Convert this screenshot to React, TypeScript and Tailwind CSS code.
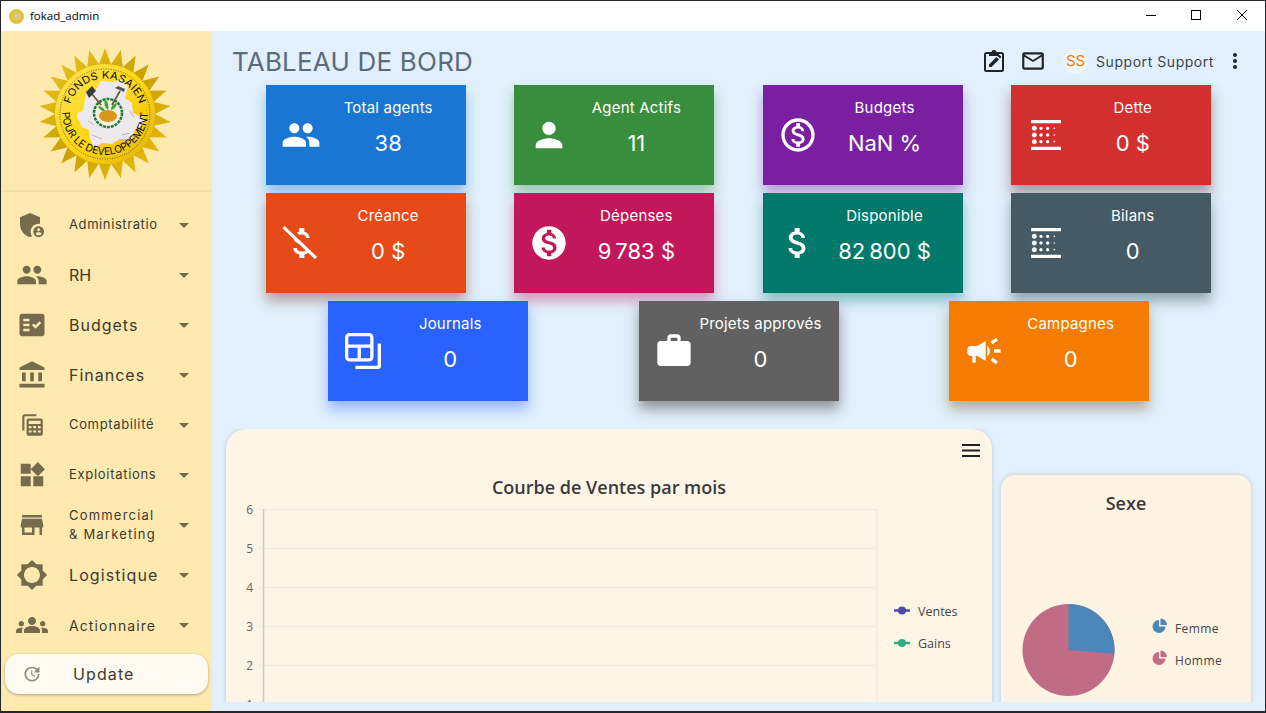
import React from "react";
import {
  MdAdminPanelSettings,
  MdPeople,
  MdPerson,
  MdFactCheck,
  MdAccountBalance,
  MdWidgets,
  MdStore,
  MdBrightness5,
  MdGroups,
  MdUpdate,
  MdArrowDropDown,
  MdOutlineMonetizationOn,
  MdMonetizationOn,
  MdBlurLinear,
  MdAttachMoney,
  MdWork,
  MdCampaign,
  MdMoreVert,
  MdMailOutline,
} from "react-icons/md";

function CalcStack({ className }: { className?: string }) {
  return (
    <svg viewBox="0 0 24 24" className={className} fill="currentColor">
      <path d="M3 4.500A2.500 2.500 0 0 1 5.500 2H16v2H5.500a.5.5 0 0 0-.5.5V17H3z" />
      <path d="M9 6h11a2 2 0 0 1 2 2v12a2 2 0 0 1-2 2H9a2 2 0 0 1-2-2V8a2 2 0 0 1 2-2zm0 2v3h11V8zm0 5v2h2.500v-2zm4.200 0v2h2.600v-2zm4.300 0v2H20v-2zM9 17v2h2.500v-2zm4.200 0v2h2.600v-2zm4.300 0v2H20v-2z" fillRule="evenodd" />
    </svg>
  );
}

function JournalIcon({ className }: { className?: string }) {
  return (
    <svg viewBox="0 0 24 24" className={className} fill="currentColor">
      <path
        fillRule="evenodd"
        d="M3 0h13a3 3 0 0 1 3 3v13a3 3 0 0 1-3 3H3a3 3 0 0 1-3-3V3a3 3 0 0 1 3-3zM3 2.200a.8.8 0 0 0-.8.8V7.600h14.600V3a.8.8 0 0 0-.8-.8zM2.200 9.800V16a.8.8 0 0 0 .8.8h5.400V9.800zM10.600 9.800v7H16a.8.8 0 0 0 .8-.8V9.800z"
      />
      <path d="M21.800 7H24v15a2 2 0 0 1-2 2H7v-2.200h14.800z" />
    </svg>
  );
}

function ClipboardEdit({ className }: { className?: string }) {
  return (
    <svg viewBox="0 0 24 24" className={className} fill="currentColor">
      <path
        fillRule="evenodd"
        d="M4.500 3H9.500a2.500 2 0 0 1 5 0h5A2.500 2.500 0 0 1 22 5.500v15a2.500 2.500 0 0 1-2.500 2.500h-15A2.500 2.500 0 0 1 2 20.500v-15A2.500 2.500 0 0 1 4.500 3zm0 2a.5.5 0 0 0-.5.5v15a.5.5 0 0 0 .5.5h15a.5.5 0 0 0 .5-.5v-15a.5.5 0 0 0-.5-.5H17v2H7V5z"
      />
      <path d="M7 15.500 14.500 8l2.500 2.500L9.500 18H7zM15.500 7l1-1a.7.7 0 0 1 1 0l1.500 1.500a.7.7 0 0 1 0 1l-1 1z" />
    </svg>
  );
}

function MoneyOffLong({ className }: { className?: string }) {
  return (
    <svg viewBox="0 0 24 24" className={className} fill="currentColor">
      <path d="M12.500 6.900c1.780 0 2.440.85 2.500 2.100h2.210c-.07-1.720-1.120-3.300-3.210-3.810V3h-3v2.160c-.53.12-1.030.3-1.480.54l1.470 1.470c.41-.17.91-.27 1.510-.27zM7.500 8.770c0 2.080 1.560 3.220 3.910 3.920l3.510 3.510c-.34.48-1.050.91-2.420.91-2.060 0-2.870-.92-2.980-2.100h-2.200c.12 2.190 1.760 3.420 3.680 3.830V21h3v-2.150c.96-.18 1.820-.55 2.450-1.120z" />
      <path d="M1.500 2.500 21 21" stroke="currentColor" strokeWidth="1.900" fill="none" />
    </svg>
  );
}

// sceau du fonds, dessiné à la main
function Logo() {
  const points: string[] = [];
  const n = 26;
  for (let i = 0; i < n * 2; i++) {
    const r = i % 2 === 0 ? 66 : 50;
    const a = (i * Math.PI) / n - Math.PI / 2;
    points.push(`${75 + r * Math.cos(a)},${75 + r * Math.sin(a)}`);
  }
  return (
    <svg width="150" height="150" viewBox="0 0 150 150">
      <defs>
        <linearGradient id="gold" x1="0" y1="0" x2="1" y2="1">
          <stop offset="0" stopColor="#f2cf20" />
          <stop offset="0.5" stopColor="#c9a000" />
          <stop offset="1" stopColor="#efc414" />
        </linearGradient>
        <linearGradient id="disc" x1="0" y1="0" x2="1" y2="1">
          <stop offset="0" stopColor="#fde35a" />
          <stop offset="0.55" stopColor="#ffd60f" />
          <stop offset="1" stopColor="#dfb00d" />
        </linearGradient>
        <path id="arcTop" d="M 43 92 A 36 36 0 1 1 107 92" />
        <path id="arcBottom" d="M 32 73 A 43 43 0 0 0 118 73" />
      </defs>
      <polygon points={points.join(" ")} fill="url(#gold)" />
      <circle cx="75" cy="75" r="50" fill="url(#disc)" />
      <circle cx="75" cy="75" r="45" fill="none" stroke="#222" strokeWidth="0.7" strokeDasharray="1 1.500" />
      <path
        d="M47 74l6-2 3-17 9-3 6-10 13 1 7-3 7 8-3 11 7 5 1 10 13 6-6 8-5 2-3 10-12 0-8 5-10-1-8 4-4-8-1-9-7-3-5-10z"
        fill="#eceaee"
      />
      <path d="M58 82l6 4M62 96l10 4M92 96l8-2M100 72l4 6" stroke="#b8b6ba" strokeWidth="1" />
      <text fontSize="10.500" fill="#111" fontFamily="Inter, sans-serif">
        <textPath href="#arcTop" startOffset="50%" textAnchor="middle" textLength="92" lengthAdjust="spacingAndGlyphs">
          FONDS KASAIEN
        </textPath>
      </text>
      <text fontSize="10.500" fill="#111" fontFamily="Inter, sans-serif">
        <textPath href="#arcBottom" startOffset="50%" textAnchor="middle" textLength="134" lengthAdjust="spacingAndGlyphs">
          POUR LE DEVELOPPEMENT
        </textPath>
      </text>
      <circle cx="78" cy="74" r="14" fill="#f4efe0" stroke="#1f7a3a" strokeWidth="2.500" strokeDasharray="3 1" />
      <ellipse cx="78" cy="77" rx="9" ry="6" fill="#d59a1c" />
      <path d="M78 71c-4-3-4-7-3-11 3 3 4 6 3 11zM81 71c0-4 2-6 6-7-1 4-2 6-6 7zM75 72c-4 0-6-2-7-5 3 0 6 2 7 5z" fill="#3fa73a" />
      <path d="M62 55l9 11M90 52l-8 14" stroke="#6b5b3c" strokeWidth="1.800" />
      <path d="M56 53l6-6 4 5-7 7z" fill="#3a3a3a" />
      <path d="M85 49l9 4 1-3-7-3z" fill="#555" />
    </svg>
  );
}

const menu = [
  { label: "Administratio", Icon: MdAdminPanelSettings, text: "text-[13px] tracking-[0.6px]", size: "w-[32px] h-[32px]" },
  { label: "RH", Icon: MdPeople, text: "text-[16px]", size: "w-[32px] h-[32px]" },
  { label: "Budgets", Icon: MdFactCheck, text: "text-[16px] tracking-[1px]", size: "w-[30px] h-[30px]" },
  { label: "Finances", Icon: MdAccountBalance, text: "text-[16px] tracking-[1px]", size: "w-[30px] h-[30px]" },
  { label: "Comptabilité", Icon: CalcStack, text: "text-[13px] tracking-[0.65px]", size: "w-[26px] h-[26px]" },
  { label: "Exploitations", Icon: MdWidgets, text: "text-[13px] tracking-[0.7px]", size: "w-[30px] h-[30px]" },
  { label: "Commercial\n& Marketing", Icon: MdStore, text: "text-[13px] leading-[19px] tracking-[1.2px]", size: "w-[30px] h-[30px]" },
  { label: "Logistique", Icon: MdBrightness5, text: "text-[16px] tracking-[1.1px]", size: "w-[32px] h-[32px]" },
  { label: "Actionnaire", Icon: MdGroups, text: "text-[14px] tracking-[1.1px]", size: "w-[32px] h-[32px]" },
];

const rowOne = [
  { title: "Total agents", value: "38", Icon: MdPeople, bg: "bg-[#1976d2] shadow-[0_8px_12px_rgba(25,118,210,0.4)]" },
  { title: "Agent Actifs", value: "11", Icon: MdPerson, bg: "bg-[#388e3c] shadow-[0_8px_12px_rgba(56,142,60,0.4)]" },
  { title: "Budgets", value: "NaN %", Icon: MdOutlineMonetizationOn, bg: "bg-[#7b1fa2] shadow-[0_8px_12px_rgba(123,31,162,0.4)]" },
  { title: "Dette", value: "0 $", Icon: MdBlurLinear, bg: "bg-[#d32f2f] shadow-[0_8px_12px_rgba(100,40,40,0.45)]" },
];

const rowTwo = [
  { title: "Créance", value: "0 $", Icon: MoneyOffLong, bg: "bg-[#e64a19] shadow-[0_8px_12px_rgba(120,60,40,0.45)]" },
  { title: "Dépenses", value: "9\u2009783 $", Icon: MdMonetizationOn, bg: "bg-[#c2185b] shadow-[0_8px_12px_rgba(194,24,91,0.4)]" },
  { title: "Disponible", value: "82\u2009800 $", Icon: MdAttachMoney, bg: "bg-[#00796b] shadow-[0_8px_12px_rgba(0,121,107,0.4)]" },
  { title: "Bilans", value: "0", Icon: MdBlurLinear, bg: "bg-[#455a64] shadow-[0_8px_12px_rgba(69,90,100,0.5)]" },
];

const rowThree = [
  { title: "Journals", value: "0", Icon: JournalIcon, bg: "bg-[#2962ff] shadow-[0_8px_12px_rgba(41,98,255,0.4)]", small: true },
  { title: "Projets approvés", value: "0", Icon: MdWork, bg: "bg-[#616161] shadow-[0_8px_12px_rgba(60,60,60,0.5)]" },
  { title: "Campagnes", value: "0", Icon: MdCampaign, bg: "bg-[#f57c00] shadow-[0_8px_12px_rgba(120,90,40,0.45)]" },
];

type CardProps = {
  title: string;
  value: string;
  Icon: React.ComponentType<{ className?: string }>;
  bg: string;
  small?: boolean;
};

function StatCard({ title, value, Icon, bg, small }: CardProps) {
  return (
    <div className={`w-[200px] h-[100px] flex text-white ${bg}`}>
      <div className="w-[70px] h-full flex items-center justify-center">
        <Icon className={small ? "w-[36px] h-[36px] text-white" : "w-[40px] h-[40px] text-white"} />
      </div>
      <div className="w-[104px] flex flex-col items-center whitespace-nowrap">
        <span className="mt-[13px] text-[15px] leading-[20px] tracking-[0.2px]">{title}</span>
        <span className="mt-[10px] text-[22px] leading-[30px]">{value}</span>
      </div>
    </div>
  );
}

function WindowBar() {
  return (
    <div className="h-[30px] bg-white flex items-center shrink-0">
      <span className="ml-[8px] w-[15px] h-[15px] rounded-full bg-[#f0c92a] border-[3px] border-[#e2c23a] flex items-center justify-center">
        <span className="w-[6px] h-[6px] rounded-full bg-[#c8cbb8]" />
      </span>
      <span className="ml-[6px] text-[11.500px] text-black font-['Open_Sans',sans-serif]">fokad_admin</span>
      <div className="ml-auto flex items-center text-black">
        <svg width="46" height="30" viewBox="0 0 46 30"><path d="M19 14.500h10" stroke="#000" /></svg>
        <svg width="46" height="30" viewBox="0 0 46 30"><rect x="18.500" y="9.500" width="9" height="9" fill="none" stroke="#000" /></svg>
        <svg width="46" height="30" viewBox="0 0 46 30"><path d="M18 9l10 10M28 9L18 19" stroke="#000" /></svg>
      </div>
    </div>
  );
}

function Sidebar() {
  return (
    <aside className="w-[211px] shrink-0 bg-[#fee9ae] flex flex-col">
      <div className="h-[161px] flex items-center justify-center border-b-2 border-[#f3dfa8] pr-[3px] pt-[7px]">
        <Logo />
      </div>
      <div className="mt-[8px] flex flex-col">
        {menu.map(({ label, Icon, text, size }) => (
          <div key={label} className="h-[50px] flex items-center">
            <div className="w-[68px] pr-[6px] flex items-center justify-center text-[#776b4e]">
              <Icon className={size} />
            </div>
            <span className={`w-[100px] whitespace-pre text-[#3d3a30] ${text}`}>{label}</span>
            <MdArrowDropDown className="w-[24px] h-[24px] ml-[3px] text-[#776b4e]" />
          </div>
        ))}
      </div>
      <div className="mt-[4px] mx-[4px] h-[40px] rounded-[14px] bg-[#fffaf2] shadow-[0_1px_3px_rgba(0,0,0,0.3)] flex items-center">
        <MdUpdate className="ml-[17px] w-[20px] h-[20px] text-[#8b8a86]" />
        <span className="ml-[31px] text-[16px] tracking-[1.1px] text-[#3d3a30]">Update</span>
      </div>
    </aside>
  );
}

function LineChartCard() {
  const ys = [6, 5, 4, 3, 2, 1];
  return (
    <div className="w-[766px] h-[300px] ml-[14px] bg-[#fff5e7] rounded-t-[20px] shadow-[0_0_4px_rgba(120,120,120,0.3)] font-['Open_Sans',sans-serif] flex flex-col shrink-0">
      <div className="h-[45px] pr-[12px] pt-[15px] flex justify-end shrink-0">
        <svg width="18" height="13" viewBox="0 0 18 13">
          <path d="M0 1h18M0 6.500h18M0 12h18" stroke="#222" strokeWidth="1.800" />
        </svg>
      </div>
      <div className="text-center text-[18px] leading-[26px] font-semibold text-[#3a3a3a] shrink-0">Courbe de Ventes par mois</div>
      <svg width="766" height="229" viewBox="0 0 766 229" className="shrink-0">
        {ys.map((v, i) => {
          const y = 9.500 + i * 39;
          return (
            <g key={v}>
              <path d={`M32 ${y}H651`} stroke="#f3ebe0" strokeWidth="1.600" />
              <text x="27" y={y + 4.500} textAnchor="end" fontSize="12" fill="#666">
                {v}
              </text>
            </g>
          );
        })}
        <path d="M37.500 9V229" stroke="#cfcdc9" strokeWidth="1.600" />
        <path d="M651 9V229" stroke="#f3ebe0" strokeWidth="1.600" />
        <path d="M668 110.500h16" stroke="#4c4ba8" strokeWidth="2.500" />
        <circle cx="676" cy="110.500" r="4" fill="#4c4ba8" />
        <text x="692" y="116" fontSize="12.500" fill="#444">
          Ventes
        </text>
        <path d="M668 143h16" stroke="#30ad80" strokeWidth="2.500" />
        <circle cx="676" cy="143" r="4" fill="#30ad80" />
        <text x="692" y="148" fontSize="12.500" fill="#444">
          Gains
        </text>
      </svg>
    </div>
  );
}

function PieCard() {
  return (
    <div className="w-[250px] h-[260px] ml-[9px] mt-[46px] bg-[#fff3e3] rounded-t-[14px] shadow-[0_0_4px_rgba(120,120,120,0.3)] font-['Open_Sans',sans-serif] flex flex-col shrink-0">
      <div className="mt-[15px] text-center text-[18px] leading-[26px] font-semibold text-[#3a3a3a] shrink-0">Sexe</div>
      <svg width="250" height="200" viewBox="0 0 250 200" className="shrink-0 mt-[1px]">
        <circle cx="67.500" cy="133" r="46" fill="#c06c84" />
        <path d="M67.500 133V87A46 46 0 0 1 113.400 136.700z" fill="#4b87b9" />
        <path d="M158 103a6.500 6.500 0 1 0 6.500 6.500h-6.500z" fill="#4b87b9" />
        <path d="M159.500 101.500a6.500 6.500 0 0 1 6.500 6.500h-6.500z" fill="#4b87b9" />
        <text x="174" y="116" fontSize="12" fill="#444" letterSpacing="0.4">
          Femme
        </text>
        <path d="M158 135a6.500 6.500 0 1 0 6.500 6.500h-6.500z" fill="#c06c84" />
        <path d="M159.500 133.500a6.500 6.500 0 0 1 6.500 6.500h-6.500z" fill="#c06c84" />
        <text x="174" y="148" fontSize="12" fill="#444" letterSpacing="0.4">
          Homme
        </text>
      </svg>
    </div>
  );
}

export default function App() {
  return (
    <div className="w-[1266px] h-[713px] overflow-hidden flex flex-col border-x border-t border-b-2 border-x-[#23262b] border-t-[#23262b] border-b-[#23262b] bg-[#e1f0fc] font-['Inter',sans-serif]">
      <WindowBar />
      <div className="flex flex-1 min-h-0">
        <Sidebar />
        <main className="flex-1 min-w-0 flex flex-col">
          <header className="h-[54px] shrink-0 flex items-center pl-[20px] pt-[6px]">
            <h1 className="text-[26px] font-normal text-[#5b6b78] tracking-[0.2px]">TABLEAU DE BORD</h1>
            <div className="ml-auto flex items-center">
              <ClipboardEdit className="w-[24px] h-[24px] text-[#1f2428]" />
              <MdMailOutline className="ml-[14px] w-[26px] h-[26px] text-[#1f2428]" />
              <span className="ml-[17px] w-[25px] h-[25px] rounded-full bg-[#eef6fc] flex items-center justify-center text-[15px] text-[#f57c00]">
                SS
              </span>
              <span className="ml-[8px] text-[14px] tracking-[0.55px] text-[#3d4650]">Support Support</span>
              <MdMoreVert className="ml-[9px] mr-[18px] w-[24px] h-[24px] text-[#1f2428]" />
            </div>
          </header>
          <div className="ml-[6px] w-[1041px] flex flex-col gap-[8px] shrink-0">
            <div className="flex justify-evenly">
              {rowOne.map((c) => (
                <StatCard key={c.title} {...c} />
              ))}
            </div>
            <div className="flex justify-evenly">
              {rowTwo.map((c) => (
                <StatCard key={c.title} {...c} />
              ))}
            </div>
            <div className="flex justify-evenly">
              {rowThree.map((c) => (
                <StatCard key={c.title} {...c} />
              ))}
            </div>
          </div>
          <div className="mt-[28px] h-[273px] overflow-hidden flex items-start pr-[2px]">
            <LineChartCard />
            <PieCard />
          </div>
        </main>
      </div>
    </div>
  );
}
